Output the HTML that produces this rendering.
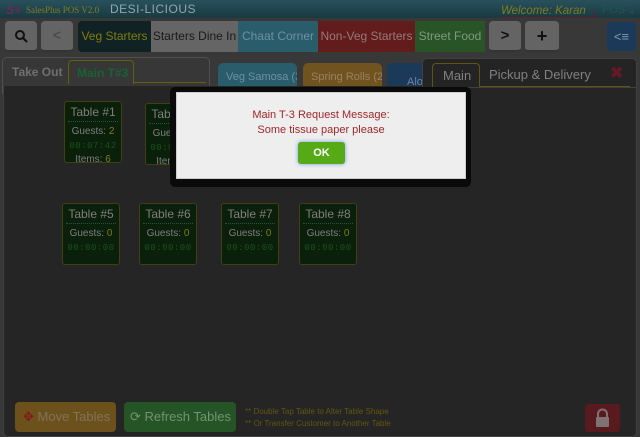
<!DOCTYPE html>
<html><head><style>
*{margin:0;padding:0;box-sizing:border-box}
body{width:640px;height:437px;overflow:hidden;background:#383838;font-family:"Liberation Sans",sans-serif;position:relative}
.a{position:absolute}
.hdr{left:0;top:0;width:640px;height:18px;background:linear-gradient(#28515d,#1a3940)}
.btn{background:#646464;border-radius:4px;border-bottom:2px solid #333;color:#111;font-size:15px;font-weight:bold;text-align:center;line-height:30px}
.tab{top:21px;height:31px;font-size:12px;line-height:31px;text-align:center}
.tbl{background:#0b200b;border:1px solid #443f10;border-radius:3px;text-align:center;font-size:10px;color:#7e7e7e}
.tbl .t{font-size:12px;padding:3px 0 2px;border-bottom:1px dotted #245050;margin:0 3px}
.tbl .g{margin-top:4px}
.tbl .g b{font-weight:normal;color:#7e7e10}
.tbl .c{color:#195219;font-family:"Liberation Mono",monospace;font-size:9px;margin-top:4px;letter-spacing:.5px}
</style></head><body>
<div class="a hdr"></div>
<div class="a" style="left:6px;top:3px;color:#6a2a5a;font-size:12px;font-style:italic;font-weight:bold">S+</div>
<div class="a" style="left:26px;top:5px;color:#7e7e20;font-size:9px;font-family:'Liberation Serif',serif">SalesPlus POS V2.0</div>
<div class="a" style="left:110px;top:2px;color:#90a8ad;font-size:12px;letter-spacing:.5px">DESI-LICIOUS</div>
<div class="a" style="left:501px;top:3px;color:#7e7e20;font-size:11.5px;font-style:italic;border-bottom:1px solid #602030">Welcome: Karan <span style="color:#701a2a">⌄</span></div>
<div class="a" style="left:602px;top:4px;color:#1c5653;font-size:11px">POS-1</div>

<div class="a btn" style="left:5px;top:21px;width:32px;height:31px">
<svg width="14" height="14" viewBox="0 0 14 14" style="margin-top:8px"><circle cx="6" cy="6" r="4" stroke="#111" stroke-width="2" fill="none"/><path d="M9 9l4 4" stroke="#111" stroke-width="2.2"/></svg></div>
<div class="a btn" style="left:41px;top:21px;width:32px;height:31px;color:#444;font-weight:normal">&lt;</div>
<div class="a tab" style="left:78px;width:73px;background:#112224;color:#7e7e10;border-radius:4px 0 0 4px">Veg Starters</div>
<div class="a tab" style="left:151px;width:87px;background:#656565;color:#1a1a1a">Starters Dine In</div>
<div class="a tab" style="left:238px;width:80px;background:#295d6c;color:#7090a0">Chaat Corner</div>
<div class="a tab" style="left:318px;width:97px;background:#621c1c;color:#987878">Non-Veg Starters</div>
<div class="a tab" style="left:415px;width:70px;background:#285428;color:#809880">Street Food</div>
<div class="a btn" style="left:489px;top:21px;width:32px;height:31px">&gt;</div>
<div class="a btn" style="left:525px;top:21px;width:34px;height:31px;font-size:18px">+</div>
<div class="a" style="left:607px;top:22px;width:29px;height:29px;background:#1b3a5a;border-radius:4px;color:#8098ad;font-size:13px;text-align:center;line-height:29px">&lt;≡</div>

<div class="a" style="left:2px;top:57px;width:208px;height:40px;border:1px solid #505050;border-radius:5px;background:#373737"></div>
<div class="a" style="left:12px;top:65px;color:#707070;font-size:12px;font-weight:bold">Take Out</div>
<div class="a" style="left:68px;top:60px;width:66px;height:24px;border:1px solid #60600f;border-bottom:none;border-radius:4px 4px 0 0;color:#186234;font-size:12px;font-weight:bold;padding:5px 0 0 8px">Main T#3</div>
<div class="a" style="left:134px;top:82px;width:72px;height:1px;background:#60600f"></div>
<div class="a" style="left:218px;top:63px;width:79px;height:30px;background:#295d6c;border-radius:5px;color:#7090a0;font-size:11px;padding:8px 0 0 8px;white-space:nowrap;overflow:hidden">Veg Samosa (3</div>
<div class="a" style="left:303px;top:63px;width:79px;height:30px;background:#71531f;border-radius:5px;color:#988265;font-size:11px;padding:8px 0 0 8px;white-space:nowrap;overflow:hidden">Spring Rolls (2</div>
<div class="a" style="left:387px;top:63px;width:40px;height:30px;background:#1b3a5a;border-radius:5px;color:#708098;font-size:11px;padding:13px 0 0 20px">Alo</div>

<div class="a" style="left:3px;top:86px;width:634px;height:351px;background:#252525;border-radius:0 0 5px 5px;border:1px solid #404040;border-top:none"></div>

<div class="a" style="left:422px;top:58px;width:215px;height:30px;background:#242424;border:1px solid #404040;border-radius:5px 5px 0 0"></div>
<div class="a" style="left:432px;top:63px;width:48px;height:24px;border:1px solid #60550f;border-bottom:none;border-radius:4px 4px 0 0;color:#808080;font-size:13px;padding:4px 0 0 10px">Main</div>
<div class="a" style="left:480px;top:86px;width:150px;height:1px;background:#60550f"></div>
<div class="a" style="left:489px;top:67px;color:#808080;font-size:13px">Pickup &amp; Delivery</div>
<div class="a" style="left:610px;top:63px;color:#621a28;font-size:16px;font-weight:bold">✖</div>

<div class="a tbl" style="left:64px;top:101px;width:58px;height:62px"><div class="t">Table #1</div><div class="g">Guests: <b>2</b></div><div class="c">00:07:42</div><div class="g" style="margin-top:3px">Items: <b>6</b></div></div>
<div class="a tbl" style="left:145px;top:103px;width:58px;height:62px"><div class="t">Table #2</div><div class="g">Guests: <b>0</b></div><div class="c">00:07:40</div><div class="g" style="margin-top:3px">Items: <b>6</b></div></div>
<div class="a tbl" style="left:62px;top:203px;width:58px;height:62px"><div class="t">Table #5</div><div class="g">Guests: <b>0</b></div><div class="c">00:00:00</div></div>
<div class="a tbl" style="left:139px;top:203px;width:58px;height:62px"><div class="t">Table #6</div><div class="g">Guests: <b>0</b></div><div class="c">00:00:00</div></div>
<div class="a tbl" style="left:221px;top:203px;width:58px;height:62px"><div class="t">Table #7</div><div class="g">Guests: <b>0</b></div><div class="c">00:00:00</div></div>
<div class="a tbl" style="left:299px;top:203px;width:58px;height:62px"><div class="t">Table #8</div><div class="g">Guests: <b>0</b></div><div class="c">00:00:00</div></div>

<div class="a" style="left:15px;top:402px;width:101px;height:30px;background:#6c511d;border-radius:4px;color:#827258;font-size:13px;line-height:30px;padding-left:8px;white-space:nowrap"><span style="color:#801a1a">✥</span> Move Tables</div>
<div class="a" style="left:124px;top:402px;width:112px;height:30px;background:#255427;border-radius:4px;color:#729272;font-size:13px;line-height:30px;padding-left:6px;white-space:nowrap">⟳ Refresh Tables</div>
<div class="a" style="left:245px;top:406px;color:#62550f;font-size:8px;line-height:12px">** Double Tap Table to Alter Table Shape<br>** Or Transfer Customer to Another Table</div>
<div class="a" style="left:585px;top:404px;width:35px;height:28px;background:#581a1e;border-radius:3px">
<svg width="35" height="28" viewBox="0 0 35 28"><path d="M13 13v-3a4.5 4.5 0 0 1 9 0v3" stroke="#807272" stroke-width="2" fill="none"/><rect x="11" y="13" width="13" height="10" rx="1" fill="#807272"/></svg></div>

<div class="a" style="left:170px;top:87px;width:301px;height:100px;background:#0a0a0a;border-radius:5px"></div>
<div class="a" style="left:176px;top:92px;width:290px;height:87px;background:#eeeeee;border:1px solid #ccc"></div>
<div class="a" style="left:176px;top:108px;width:290px;text-align:center;color:#a02828;font-size:11px;line-height:15px">Main T-3 Request Message:<br>Some tissue paper please</div>
<div class="a" style="left:298px;top:142px;width:47px;height:22px;background:#55aa15;border-radius:3px;box-shadow:0 0 4px #6a9ae0;color:#fff;font-weight:bold;font-size:11px;text-align:center;line-height:22px">OK</div>
</body></html>
